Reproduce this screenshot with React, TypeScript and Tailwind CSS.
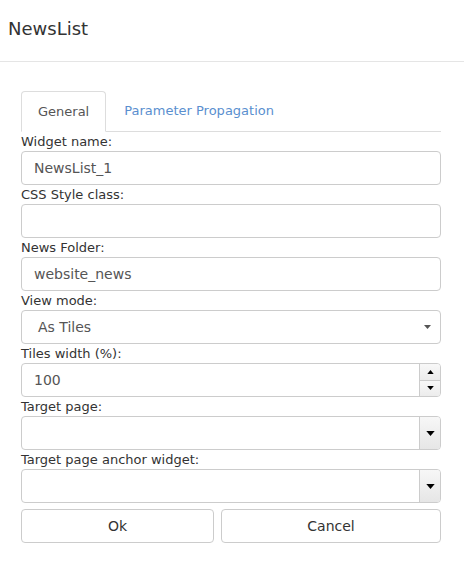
import type { ReactNode } from "react";

const font = "font-['DejaVu_Sans',Verdana,sans-serif]";

function Label({ children }: { children: ReactNode }) {
  return (
    <div className="h-[19px] pt-[1px] text-[13px] leading-[18px] text-[#333]">
      {children}
    </div>
  );
}

function TextInput({ value }: { value?: string }) {
  return (
    <div className="flex h-[34px] items-center rounded-[4px] border border-[#ccc] bg-white px-3 text-[14px] text-[#555]">
      {value}
    </div>
  );
}

function DownTriangle({ className }: { className: string }) {
  return (
    <svg viewBox="0 0 10 6" className={className} aria-hidden="true">
      <path d="M0 0h10L5 6z" fill="currentColor" />
    </svg>
  );
}

function ComboInput() {
  return (
    <div className="flex h-[34px] overflow-hidden rounded-[4px] border border-[#ccc] bg-white">
      <div className="flex-1" />
      <div className="flex w-[21px] items-center justify-center border-l border-[#ccc] bg-gradient-to-b from-[#f7f7f7] to-[#e6e6e6] text-black">
        <DownTriangle className="h-[5px] w-[9px]" />
      </div>
    </div>
  );
}

function SpinInput({ value }: { value: string }) {
  return (
    <div className="flex h-[34px] overflow-hidden rounded-[4px] border border-[#ccc] bg-white">
      <div className="flex flex-1 items-center px-3 text-[14px] text-[#555]">
        {value}
      </div>
      <div className="flex w-[21px] flex-col border-l border-[#ccc]">
        <div className="flex flex-1 items-center justify-center bg-gradient-to-b from-[#f8f8f8] to-[#ececec] text-black">
          <svg viewBox="0 0 8 5" className="h-[4px] w-[7px]" aria-hidden="true">
            <path d="M0 5h8L4 0z" fill="currentColor" />
          </svg>
        </div>
        <div className="h-px bg-[#ccc]" />
        <div className="flex flex-1 items-center justify-center bg-gradient-to-b from-[#f8f8f8] to-[#ececec] text-black">
          <DownTriangle className="h-[4px] w-[7px]" />
        </div>
      </div>
    </div>
  );
}

function SelectInput({ value }: { value: string }) {
  return (
    <div className="flex h-[34px] items-center rounded-[4px] border border-[#ccc] bg-white pl-4 pr-[9px] text-[14px] text-[#555]">
      <span className="flex-1">{value}</span>
      <DownTriangle className="h-[6px] w-[7px] text-[#555]" />
    </div>
  );
}

export default function App() {
  return (
    <div className={`${font} h-[563px] w-[464px] bg-white`}>
      <div className="flex h-[62px] items-center border-b border-[#e5e5e5] pb-[4px] pl-[8px]">
        <h1 className="text-[18px] leading-[20px] text-[#333]">NewsList</h1>
      </div>

      <div className="w-[441px] pl-[21px] pt-[29px]">
        <div className="flex items-end border-b border-[#ddd]">
          <div className="-mb-px flex h-[41px] items-center rounded-t-[4px] border border-b-white border-[#ddd] bg-white px-4 text-[13px] text-[#555]">
            General
          </div>
          <div className="ml-[2px] flex h-[40px] items-center px-4 text-[13px] text-[#5a8fcf]">
            Parameter Propagation
          </div>
        </div>

        <Label>Widget name:</Label>
        <TextInput value="NewsList_1" />
        <Label>CSS Style class:</Label>
        <TextInput />
        <Label>News Folder:</Label>
        <TextInput value="website_news" />
        <Label>View mode:</Label>
        <SelectInput value="As Tiles" />
        <Label>Tiles width (%):</Label>
        <SpinInput value="100" />
        <Label>Target page:</Label>
        <ComboInput />
        <Label>Target page anchor widget:</Label>
        <ComboInput />

        <div className="mt-[6px] flex gap-[7px]">
          <button className="h-[34px] w-[193px] rounded-[4px] border border-[#ccc] bg-white text-[14px] text-[#333]">
            Ok
          </button>
          <button className="h-[34px] flex-1 rounded-[4px] border border-[#ccc] bg-white text-[14px] text-[#333]">
            Cancel
          </button>
        </div>
      </div>
    </div>
  );
}
